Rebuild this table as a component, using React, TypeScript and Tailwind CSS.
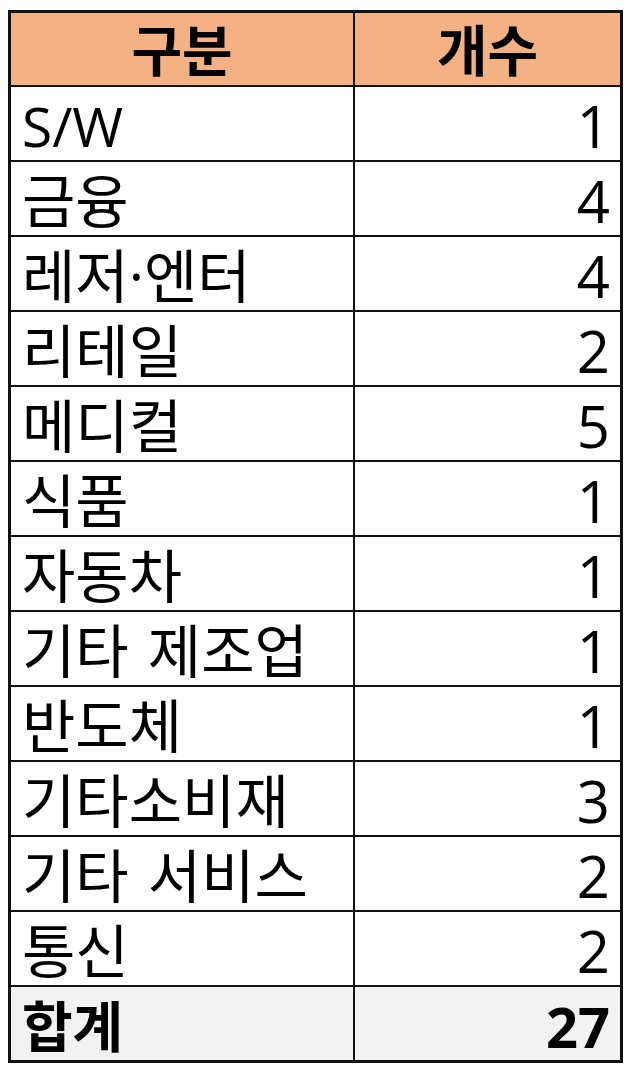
const rows: [string, string][] = [
  ["S/W", "1"],
  ["금융", "4"],
  ["레저·엔터", "4"],
  ["리테일", "2"],
  ["메디컬", "5"],
  ["식품", "1"],
  ["자동차", "1"],
  ["기타 제조업", "1"],
  ["반도체", "1"],
  ["기타소비재", "3"],
  ["기타 서비스", "2"],
  ["통신", "2"],
];

const font = { fontFamily: '"Open Sans", "Noto Sans CJK KR", sans-serif' };

export default function App() {
  return (
    <div className="min-h-[1075px] w-[633px] bg-white pl-[8px] pt-[10px] text-black" style={font}>
      <div className="w-[615px] border-[3px] border-[#111]">
        <div className="grid h-[74px] grid-cols-[344px_1fr] border-b-2 border-[#111] bg-[#f4b183] text-[55px] font-bold leading-none">
          <div className="flex items-center justify-center border-r-2 border-[#111]">구분</div>
          <div className="flex items-center justify-center">개수</div>
        </div>
        {rows.map(([name, count]) => (
          <div key={name} className="grid h-[75px] grid-cols-[344px_1fr] border-b-2 border-[#111] leading-none">
            <div className="flex items-center border-r-2 border-[#111] pl-[11px] pt-[4px] text-[58px] [word-spacing:4px]">
              {name === "S/W" ? <span className="text-[55px]">{name}</span> : name}
            </div>
            <div className="flex items-center justify-end pr-[10px] pt-[4px] text-[58px]">{count}</div>
          </div>
        ))}
        <div className="grid h-[73px] grid-cols-[344px_1fr] bg-[#f2f2f2] font-bold leading-none">
          <div className="flex items-center border-r-2 border-[#111] pl-[11px] pt-[4px] text-[55px]">합계</div>
          <div className="flex items-center justify-end pr-[10px] pt-[4px] text-[56px]">27</div>
        </div>
      </div>
    </div>
  );
}
